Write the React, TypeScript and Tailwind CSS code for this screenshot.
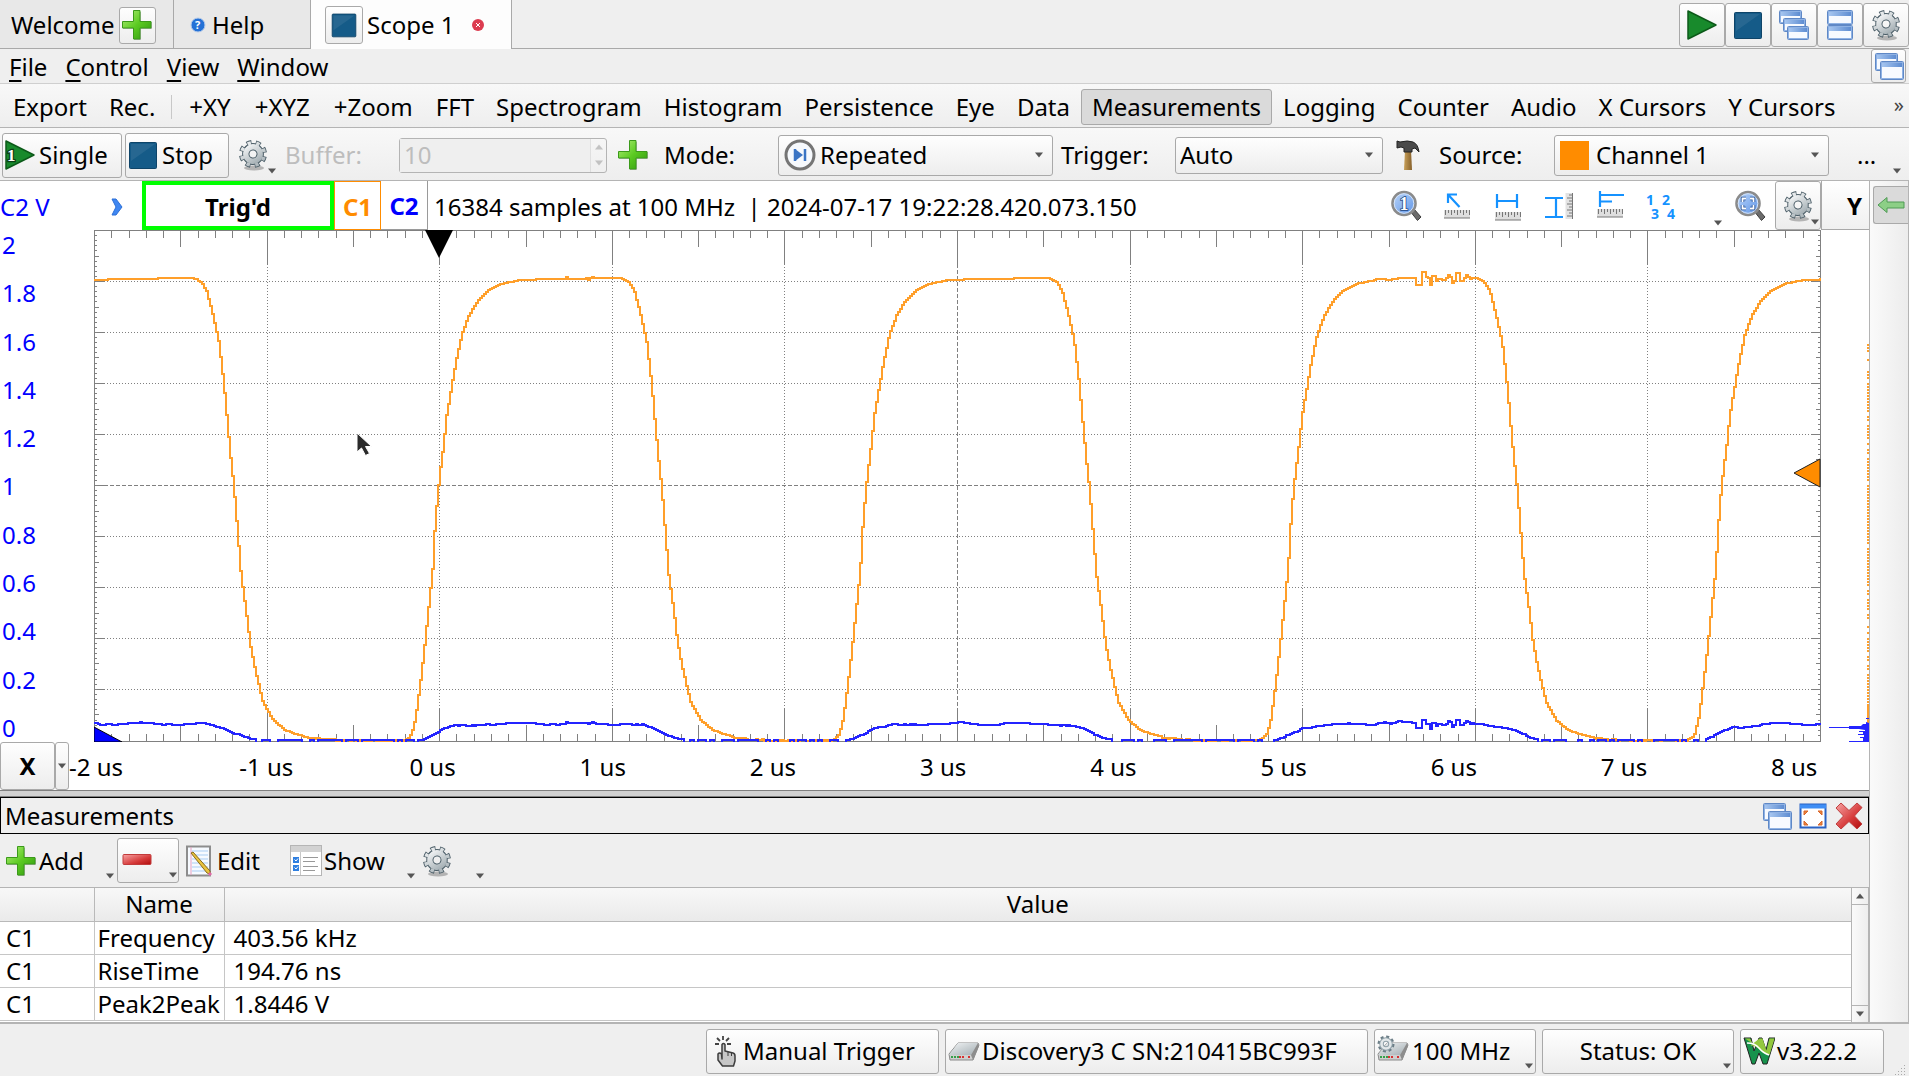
import { useState } from "react";
import type { ReactNode } from "react";
import clsx from "clsx";

type Measurement = { channel: string; name: string; value: string };

const measurements: Measurement[] = [
  { channel: "C1", name: "Frequency", value: "403.56 kHz" },
  { channel: "C1", name: "RiseTime", value: "194.76 ns" },
  { channel: "C1", name: "Peak2Peak", value: "1.8446 V" },
];

const menus = ["File", "Control", "View", "Window"];

const views = [
  "+XY",
  "+XYZ",
  "+Zoom",
  "FFT",
  "Spectrogram",
  "Histogram",
  "Persistence",
  "Eye",
  "Data",
  "Measurements",
  "Logging",
  "Counter",
  "Audio",
  "X Cursors",
  "Y Cursors",
];

const voltLabels = ["2", "1.8", "1.6", "1.4", "1.2", "1", "0.8", "0.6", "0.4", "0.2", "0"];
const timeLabels = ["-2 us", "-1 us", "0 us", "1 us", "2 us", "3 us", "4 us", "5 us", "6 us", "7 us", "8 us"];

const raised = "rounded-[3px] border border-[#a9a9a9] bg-linear-to-b from-[#fefefe] to-[#ededed]";
const bar = "border-b border-[#b4b4b4] bg-linear-to-b from-[#f8f8f8] to-[#eeeeee]";

/* ---------- icons ---------- */

function IconDefs() {
  return (
    <svg width="0" height="0" className="absolute" aria-hidden="true">
      <defs>
        <linearGradient id="green" x1="0" y1="0" x2="1" y2="1">
          <stop offset="0" stopColor="#b4ee7c" />
          <stop offset="0.5" stopColor="#5ccb22" />
          <stop offset="1" stopColor="#2f9410" />
        </linearGradient>
        <linearGradient id="red" x1="0" y1="0" x2="1" y2="1">
          <stop offset="0" stopColor="#f7a3a3" />
          <stop offset="0.6" stopColor="#d63a3a" />
          <stop offset="1" stopColor="#b00d0d" />
        </linearGradient>
        <linearGradient id="steel" x1="0" y1="0" x2="1" y2="1">
          <stop offset="0" stopColor="#f1f3f4" />
          <stop offset="1" stopColor="#a3aeb3" />
        </linearGradient>
        <linearGradient id="glass" x1="0" y1="0" x2="1" y2="1">
          <stop offset="0" stopColor="#bcd6fa" />
          <stop offset="1" stopColor="#5c93e6" />
        </linearGradient>
        <linearGradient id="titlebar" x1="0" y1="0" x2="1" y2="0">
          <stop offset="0" stopColor="#a9c8f1" />
          <stop offset="1" stopColor="#5b8ad0" />
        </linearGradient>
        <linearGradient id="wood" x1="0" y1="0" x2="1" y2="0">
          <stop offset="0" stopColor="#c9a15a" />
          <stop offset="1" stopColor="#86602a" />
        </linearGradient>
      </defs>
    </svg>
  );
}

function Gear({ className = "size-8" }: { className?: string }) {
  return (
    <svg viewBox="0 0 32 32" className={className}>
      <ellipse cx="17" cy="29" rx="10" ry="2.500" fill="#000" opacity="0.25" />
      <g transform="rotate(12 16 15)">
        <circle cx="16" cy="15" r="11.5" fill="none" stroke="#4c5e68" strokeWidth="5" strokeDasharray="4.8 4.23" />
        <circle cx="16" cy="15" r="7.2" fill="none" stroke="#4c5e68" strokeWidth="7.4" />
        <circle cx="16" cy="15" r="11.3" fill="none" stroke="url(#steel)" strokeWidth="3.6" strokeDasharray="3.4 5.47" strokeDashoffset="-0.7" />
        <circle cx="16" cy="15" r="7.2" fill="none" stroke="url(#steel)" strokeWidth="5.4" />
      </g>
    </svg>
  );
}

function Plus({ className = "size-8" }: { className?: string }) {
  return (
    <svg viewBox="0 0 32 32" className={className}>
      <path d="M13 3h7v10h11v7H20v11h-7V20H2v-7h11z" fill="#000" opacity="0.25" />
      <path d="M12.500 1.500h6.500v11h11v6.500h-11v11h-6.500v-11h-11v-6.500h11z" fill="url(#green)" stroke="#3b9a1a" strokeLinejoin="round" />
    </svg>
  );
}

function StopSquare({ className = "size-8" }: { className?: string }) {
  return (
    <svg viewBox="0 0 32 32" className={className}>
      <rect x="2.500" y="3.500" width="27" height="26" rx="1" fill="#155b88" stroke="#0e4468" />
      <path d="M4 5h24L4 22z" fill="#fff" opacity="0.08" />
    </svg>
  );
}

function Play({ mark }: { mark?: string }) {
  return (
    <svg viewBox="0 0 32 32" className="size-8">
      <path d="M2 2L30 16 2 30z" fill="#188a2c" stroke="#0d5a1a" strokeWidth="1.500" strokeLinejoin="round" />
      {mark && (
        <text x="3" y="22" fontSize="17" fontWeight="bold" fontFamily="Liberation Serif, serif" fill="#fff" stroke="#0b3d14" strokeWidth="2.500" paintOrder="stroke">
          {mark}
        </text>
      )}
    </svg>
  );
}

function Pane({ x, y, w, h }: { x: number; y: number; w: number; h: number }) {
  return (
    <g>
      <rect x={x + 0.5} y={y + 0.5} width={w} height={h} rx="1" fill="#f7faff" stroke="#5f88c6" />
      <rect x={x + 1} y={y + 1} width={w - 1} height="5" fill="url(#titlebar)" />
      <rect x={x + 1.5} y={y + 1.5} width={w - 2} height={h - 2} fill="none" stroke="#8fb2e4" />
    </g>
  );
}

function Windows({ count = 2 }: { count?: number }) {
  return (
    <svg viewBox="0 0 32 32" className="size-8">
      {count === 3 ? (
        <>
          <Pane x={1} y={1} w={22} h={13} />
          <Pane x={5} y={9} w={22} h={13} />
          <Pane x={9} y={17} w={21} h={13} />
        </>
      ) : (
        <>
          <Pane x={2} y={3} w={22} h={17} />
          <Pane x={7} y={11} w={23} h={18} />
        </>
      )}
    </svg>
  );
}

function TiledWindows() {
  return (
    <svg viewBox="0 0 32 32" className="size-8">
      <Pane x={3} y={1} w={25} h={14} />
      <Pane x={3} y={16} w={25} h={14} />
    </svg>
  );
}

function Magnifier({ children }: { children: ReactNode }) {
  return (
    <svg viewBox="0 0 32 32" className="size-8">
      <path d="M20 21l4-2 7 8-3.500 3.500z" fill="#6b6b6b" stroke="#3f3f3f" />
      <circle cx="14" cy="13.500" r="11.500" fill="url(#glass)" stroke="#8b8b8b" strokeWidth="2.600" />
      <circle cx="14" cy="13.500" r="9.800" fill="none" stroke="#d6e4f7" />
      {children}
    </svg>
  );
}

function Ruler({ vertical, y = 20 }: { vertical?: boolean; y?: number }) {
  if (vertical) {
    return (
      <g>
        <rect x="22.500" y="3" width="7" height="26" fill="#e3e3e3" />
        <path d="M29.500 3v26" stroke="#777" />
        <path d="M26 5h3M24 8h5M26 11h3M24 14h5M26 17h3M24 20h5M26 23h3M24 26h5" stroke="#777" />
      </g>
    );
  }
  return (
    <g>
      <rect x="3" y={y} width="26" height="8" fill="#dedede" />
      <path d={`M3 ${y + 8}h26`} stroke="#777" />
      <path d={`M4.500 ${y}v5M7.500 ${y}v3M10.500 ${y}v5M13.500 ${y}v3M16.500 ${y}v5M19.500 ${y}v3M22.500 ${y}v5M25.500 ${y}v3M28.500 ${y}v5`} stroke="#777" />
    </g>
  );
}

const rulerIcons: { label: string; icon: ReactNode }[] = [
  {
    label: "Zoom 1:1",
    icon: (
      <Magnifier>
        <text x="9.500" y="20" fontSize="18" fontWeight="bold" fontFamily="Liberation Serif, serif" fill="#fff" stroke="#20447c" strokeWidth="1.500" paintOrder="stroke">
          1
        </text>
      </Magnifier>
    ),
  },
  {
    label: "Free ruler",
    icon: (
      <svg viewBox="0 0 32 32" className="size-8">
        <path d="M18.500 17L7 4.500M7 13V4.500h9" fill="none" stroke="#1592ff" strokeWidth="2.200" />
        <Ruler y={20} />
      </svg>
    ),
  },
  {
    label: "Horizontal ruler",
    icon: (
      <svg viewBox="0 0 32 32" className="size-8">
        <path d="M5 4v14M25 4v14M5 11h20" fill="none" stroke="#1592ff" strokeWidth="2.200" />
        <Ruler y={22} />
      </svg>
    ),
  },
  {
    label: "Vertical ruler",
    icon: (
      <svg viewBox="0 0 32 32" className="size-8">
        <path d="M2 8h18M2 27h18M13 8v19" fill="none" stroke="#1592ff" strokeWidth="2.200" />
        <Ruler vertical />
      </svg>
    ),
  },
  {
    label: "Pulse ruler",
    icon: (
      <svg viewBox="0 0 32 32" className="size-8">
        <path d="M6 1v16M6 5h24M6 11.500h12" fill="none" stroke="#1592ff" strokeWidth="2.200" />
        <Ruler y={19} />
      </svg>
    ),
  },
  {
    label: "Quick values",
    icon: (
      <svg viewBox="0 0 32 32" className="size-8 overflow-visible">
        <g fontSize="14" fontWeight="bold" fontFamily="Noto Sans, sans-serif" fill="#1592ff">
          <text x="1" y="15">1</text>
          <text x="17" y="15">2</text>
          <text x="6" y="29">3</text>
          <text x="22" y="29">4</text>
        </g>
      </svg>
    ),
  },
];

function Caret({ className }: { className?: string }) {
  return (
    <svg viewBox="0 0 8 6" className={clsx("h-[6px] w-[8px]", className)}>
      <path d="M0 0.500h8L4 5.500z" fill="#555" />
    </svg>
  );
}

function Device({ gear }: { gear?: boolean }) {
  return (
    <svg viewBox="0 0 32 32" className="size-8">
      <path d="M10 8h20l1 2-6 15H2l-1-6z" fill="#cfcfcf" stroke="#8a8a8a" />
      <path d="M10 8h20l-7 12H1z" fill="url(#steel)" />
      <path d="M30 8l1 3-6 14-2-5z" fill="#8d8d8d" />
      <path d="M3 22h8" stroke="#35a04b" strokeWidth="2" strokeDasharray="2 1" />
      <path d="M11 22h5M20 22h2" stroke="#d63232" strokeWidth="2" strokeDasharray="2 1" />
      {gear && (
        <g>
          <circle cx="9" cy="9" r="7" fill="none" stroke="#6b7d86" strokeWidth="3" strokeDasharray="2.900 2.590" />
          <circle cx="9" cy="9" r="4.500" fill="none" stroke="#8fa0a8" strokeWidth="4.500" />
          <circle cx="9" cy="9" r="4.500" fill="none" stroke="#e3e8ea" strokeWidth="2.600" />
        </g>
      )}
    </svg>
  );
}

function Hand() {
  return (
    <svg viewBox="0 0 24 32" className="h-8 w-6">
      <path d="M10 1v4M4 3l3 3M16 3l-3 3M2 9h4M14 9h4" stroke="#444" strokeWidth="1.800" fill="none" />
      <path d="M9 24V9.500q1.500-2 3 0V16l8 2q2 .5 2 3v5l-1.500 5H9.500L5 25v-6q1.500-2 3.500 0z" fill="#c6c6c6" stroke="#3d3d3d" strokeWidth="1.500" strokeLinejoin="round" />
      <path d="M15 17v4M18.500 18v3" stroke="#3d3d3d" />
    </svg>
  );
}

function Waveforms() {
  return (
    <svg viewBox="0 0 32 32" className="size-8">
      <path d="M1 3h7l3 13 5-13h3l4 12 3-12h6l-8 26h-4l-4-11-4 11H9z" fill="#17924c" stroke="#222" />
      <path d="M2 3.500h5l2.500 5zM16.500 3.500h3l4 12 3-12h5L26.500 20q-6-1-10-5.500-4-4-9-4z" fill="#93c83e" />
      <path d="M4 8q8 0 12 5t10 7" fill="none" stroke="#fff" strokeWidth="1.500" />
    </svg>
  );
}

/* ---------- plot ---------- */

const PLOT_W = 1727;
const PLOT_H = 512;
const US = 172.6;
const PERIOD = 427.7;
const ORIGIN = 345;

// one period of each channel, x relative to the trigger position
const c1Shape = [
  [-36, 509], [-32, 508], [-28, 504], [-24, 488], [-19, 450], [-15, 415], [-11, 377], [-7, 339], [-5, 301],
  [-2, 264], [0, 245], [4, 214], [7, 185], [11, 162], [16, 133], [22, 105], [29, 86], [38, 71], [48, 61],
  [61, 54], [81, 50], [111, 49], [181, 48], [186, 50], [190, 53], [195, 62], [201, 85], [207, 112],
  [212, 155], [216, 200], [219, 231], [222, 258], [225, 295], [229, 345], [234, 380], [238, 413], [243, 439],
  [251, 472], [261, 490], [273, 500], [284, 504], [301, 508], [331, 510], [391.7, 510],
];
const c2Shape = [
  [-36, 510], [-18, 510], [-11, 507], [1, 501], [11, 497], [31, 496], [51, 494], [91, 494], [190, 494],
  [201, 496], [214, 499], [226, 504], [236, 508], [246, 510], [391.7, 510],
];
const glitches = [
  [1323, 6], [1326, 6], [1329, -7], [1332, -2], [1336, 6], [1339, -3], [1342, 2], [1349, 2], [1354, -3],
  [1358, 5], [1360, 3], [1363, -5], [1367, 3], [1372, -3], [1376, 1], [472, -2], [498, -1], [494, 2],
];

function sample(shape: number[][], x: number) {
  let t = (x - ORIGIN + 36) % PERIOD;
  if (t < 0) t += PERIOD;
  t -= 36;
  for (let i = 1; i < shape.length; i++) {
    if (t <= shape[i][0]) {
      const [x0, y0] = shape[i - 1];
      const [x1, y1] = shape[i];
      return y0 + ((y1 - y0) * (t - x0)) / (x1 - x0);
    }
  }
  return shape[shape.length - 1][1];
}

function noise(i: number) {
  const n = Math.sin(i * 12.9898) * 43758.5453;
  return n - Math.floor(n);
}

function trace(shape: number[][], kind: "c1" | "c2") {
  let d = "";
  for (let i = 0; i * 2 <= PLOT_W; i++) {
    const x = i * 2;
    const base = sample(shape, x);
    let y = base;
    if (kind === "c2") {
      // resting level toggles around the lower edge of the plot
      if (base >= 509.5) y = noise(Math.floor(i / 2)) > 0.55 ? 513 : 510;
      else if (base < 506) y += Math.round(Math.sin(i / 5) + noise(Math.floor(i / 3)) - 0.7);
    } else if (base > 506) {
      y += noise(i) > 0.5 ? 1 : 0;
    }
    if (base < 500) {
      const hit = glitches.find(([gx]) => Math.abs(gx - x) <= 1);
      if (hit) y += kind === "c2" ? Math.round(hit[1] * 0.7) : hit[1];
      else if (x > 1280 && x < 1385) y += noise(Math.floor(i / 2)) > 0.6 ? -1 : 0;
    }
    y = Math.round(y);
    d += i === 0 ? `M0 ${y}` : `V${y}H${x + 2}`;
  }
  return d;
}

const c1Path = trace(c1Shape, "c1");
const c2Path = trace(c2Shape, "c2");

function gridTicks() {
  let d = "";
  for (let i = 1; i < 100; i++) {
    const x = Math.round((i * US) / 10) + 0.5;
    const len = i % 10 === 0 ? 34 : i % 5 === 0 ? 17 : 8;
    d += `M${x} 0v${len}M${x} ${PLOT_H}v-${len}`;
    const y = Math.round(i * 5.1) + 0.5;
    const side = i % 10 === 0 ? 10 : i % 5 === 0 ? 5 : 3;
    d += `M0 ${y}h${side}M${PLOT_W} ${y}h-${side}`;
  }
  return d;
}

const divisions = [1, 2, 3, 4, 5, 6, 7, 8, 9];

function Plot() {
  return (
    <svg viewBox={`0 0 ${PLOT_W} ${PLOT_H}`} preserveAspectRatio="none" className="h-full min-w-0 flex-1" role="img" aria-label="Oscilloscope traces">
      <rect x="0.5" y="0.5" width={PLOT_W - 1} height={PLOT_H - 1} fill="#fff" stroke="#808080" />
      <path d={gridTicks()} stroke="#808080" fill="none" />
      {divisions.map((n) => (
        <g key={n} stroke="#808080">
          <path d={`M${Math.round(n * US) + 0.5} 34V478`} strokeDasharray={n === 5 ? "4 2" : "1 2"} />
          <path d={`M10 ${n * 51 + 0.5}H1717`} strokeDasharray={n === 5 ? "4 2" : "1 2"} />
        </g>
      ))}
      <path d="M0 497L28 512H0z" fill="#0000ff" stroke="#000" />
      <path d={c1Path} fill="none" stroke="#ff9f2a" strokeWidth="2" shapeRendering="crispEdges" />
      <path d={c2Path} fill="none" stroke="#2424ff" strokeWidth="2" shapeRendering="crispEdges" />
      <path d="M331 0h28L345 28z" fill="#000" />
      <path d="M1726 229v28L1700 243z" fill="#ff8c00" stroke="#222" />
      <path d="M263 203v19l4.500-4 4 7.500 4-2-4-7h6z" fill="#2b2b2b" stroke="#fff" />
    </svg>
  );
}

function sideDashes() {
  let d = "";
  for (let y = 112; y < 496; y += 3) {
    if (noise(y) > 0.25) d += `M46 ${y}h2`;
  }
  return d;
}

function HistogramStrip() {
  return (
    <svg viewBox="0 0 48 512" preserveAspectRatio="none" className="h-full w-12">
      <path d={sideDashes()} stroke="#ff9f2a" strokeWidth="2" />
      <path d="M47 476v24" stroke="#ff9f2a" strokeWidth="2" />
      <path
        d="M48 493V512H28v-1h14v-3h-3v-1h4v-2h-6v-1h5v-2h-4v-1h6v-1l-6-1H28v-1H8v-1h20v-1h12l2-2h3v-2z"
        fill="#2424ff"
      />
      <path d="M45 488.500h3" stroke="#2424ff" />
    </svg>
  );
}

/* ---------- pieces ---------- */

function Combo({
  id,
  options,
  className,
  icon,
}: {
  id: string;
  options: string[];
  className: string;
  icon?: ReactNode;
}) {
  return (
    <div className={clsx("relative", className)}>
      <select
        id={id}
        className={clsx("h-full w-full appearance-none", raised, icon ? "pl-[41px]" : "pl-1")}
      >
        {options.map((option) => (
          <option key={option}>{option}</option>
        ))}
      </select>
      {icon && <span className="pointer-events-none absolute inset-y-0 left-[6px] flex items-center">{icon}</span>}
      <Caret className="pointer-events-none absolute top-1/2 right-[10px] -translate-y-1/2" />
    </div>
  );
}

function Tabs() {
  return (
    <div className="flex h-[49px] bg-[#efefef]">
      <div className="flex w-[174px] items-center gap-1 border-r border-b border-[#a9a9a9] bg-[#e8e8e8] pt-[2px] pl-[11px]">
        <button type="button">Welcome</button>
        <button type="button" aria-label="New instrument" className={clsx("flex size-[37px] items-center justify-center", raised)}>
          <Plus />
        </button>
      </div>
      <button type="button" className="flex w-[137px] items-center gap-[6px] border-r border-b border-[#a9a9a9] bg-[#e8e8e8] pt-[2px] pl-4">
        <svg viewBox="0 0 16 16" className="size-4">
          <circle cx="8" cy="8" r="7" fill="#2471d6" stroke="#b9cdea" />
          <text x="5" y="12" fontSize="11" fontWeight="bold" fontFamily="Noto Sans, sans-serif" fill="#fff">?</text>
        </svg>
        Help
      </button>
      <div className="flex w-[200px] items-center bg-[#fdfdfd] pl-[14px]">
        <span className={clsx("flex size-[38px] items-center justify-center", raised)}>
          <StopSquare className="size-7" />
        </span>
        <button type="button" className="ml-1">Scope 1</button>
        <button type="button" aria-label="Close Scope 1" className="ml-[18px]">
          <svg viewBox="0 0 12 12" className="size-3">
            <circle cx="6" cy="6" r="6" fill="#dc3c50" />
            <path d="M4 4l4 4M8 4l-4 4" stroke="#fff" />
          </svg>
        </button>
      </div>
      <div className="flex flex-1 justify-end border-b border-l border-[#a9a9a9] pt-[3px] pb-px">
        {[
          { label: "Run all", icon: <Play /> },
          { label: "Stop all", icon: <StopSquare /> },
          { label: "Cascade", icon: <Windows count={3} /> },
          { label: "Tile", icon: <TiledWindows /> },
          { label: "Settings", icon: <Gear /> },
        ].map((item) => (
          <button key={item.label} type="button" aria-label={item.label} className={clsx("flex w-[46px] items-center justify-center", raised)}>
            {item.icon}
          </button>
        ))}
      </div>
    </div>
  );
}

function MenuBar() {
  return (
    <div className="flex h-[35px] items-center border-b border-[#cfcfcf] bg-[#efefef] pr-[3px] pl-[9px]">
      <nav className="flex flex-1 gap-[18px] pt-[2px]">
        {menus.map((menu) => (
          <button key={menu} type="button">
            <span className="underline decoration-2 underline-offset-4">{menu[0]}</span>
            {menu.slice(1)}
          </button>
        ))}
      </nav>
      <button type="button" aria-label="Undock" className={clsx("flex h-[34px] w-[35px] items-center justify-center", raised)}>
        <Windows />
      </button>
    </div>
  );
}

function ViewBar({ active, onToggle }: { active: string; onToggle: (view: string) => void }) {
  return (
    <div className={clsx("flex h-[44px] items-center pt-[2px] pl-[2px]", bar)}>
      <button type="button" className="px-[11px]">Export</button>
      <button type="button" className="px-[11px]">Rec.</button>
      <span className="mr-[5px] ml-[5px] h-6 w-px bg-[#c8c8c8]" />
      {views.map((view) => (
        <button
          key={view}
          type="button"
          onClick={() => onToggle(view)}
          className={clsx(
            "h-9 rounded-[3px] border",
            view.startsWith("+") ? "px-[11px]" : "px-[10px]",
            active === view ? "border-[#a9a9a9] bg-[#dadada]" : "border-transparent",
          )}
        >
          {view}
        </button>
      ))}
      <button type="button" aria-label="More views" className="mr-[5px] ml-auto pb-1 text-xl text-[#444]">»</button>
    </div>
  );
}

function ControlBar() {
  return (
    <div className={clsx("flex h-[53px] items-center pt-[2px] pl-[2px]", bar)}>
      <button type="button" className={clsx("flex h-[45px] w-[120px] items-center gap-[3px] pl-px", raised)}>
        <Play mark="1" />
        Single
      </button>
      <button type="button" className={clsx("ml-[3px] flex h-[45px] w-[104px] items-center gap-[3px] pl-px", raised)}>
        <StopSquare />
        Stop
      </button>
      <button type="button" aria-label="Acquisition options" className="relative ml-2 flex h-[45px] w-[39px] items-center">
        <Gear />
        <Caret className="absolute right-0 bottom-1" />
      </button>
      <label htmlFor="buffer" className="ml-[9px] w-[114px] text-[#bdbdbd]">Buffer:</label>
      <div className="flex h-[35px] w-[208px] rounded-[3px] border border-[#b4b4b4]">
        <input id="buffer" disabled defaultValue="10" className="min-w-0 flex-1 bg-[#efefef] pl-1 text-[#bdbdbd]" />
        <span className="flex w-4 flex-col items-center justify-around border-l border-[#b4b4b4] opacity-30">
          <Caret className="rotate-180" />
          <Caret />
        </span>
      </div>
      <button type="button" aria-label="Add buffer" className="ml-[10px]">
        <Plus />
      </button>
      <label htmlFor="mode" className="ml-[15px] w-[114px]">Mode:</label>
      <Combo
        id="mode"
        options={["Repeated", "Screen", "Shift", "Record"]}
        className="h-[41px] w-[275px]"
        icon={
          <svg viewBox="0 0 32 32" className="size-8">
            <circle cx="16" cy="16" r="14" fill="#f6f9fd" stroke="#757575" strokeWidth="3" />
            <path d="M11 10v12M21 10v12" stroke="#3a74c4" strokeWidth="2.500" />
            <path d="M11 10l8 6-8 6z" fill="#3a74c4" />
          </svg>
        }
      />
      <label htmlFor="trigger" className="ml-2 w-[114px]">Trigger:</label>
      <Combo id="trigger" options={["Auto", "Normal", "None"]} className="h-[37px] w-[208px]" />
      <button type="button" aria-label="Trigger tools" className="ml-2">
        <svg viewBox="0 0 32 32" className="size-8">
          <path d="M14 11h6l1 20h-8z" fill="url(#wood)" />
          <path d="M6 2l3 1q8-2 13 0 5 2 6 10l-4-4-3 1v3h-8v-4l-3-1-4 1z" fill="#4a4a4a" stroke="#222" />
        </svg>
      </button>
      <label htmlFor="source" className="ml-4 w-[115px]">Source:</label>
      <Combo
        id="source"
        options={["Channel 1", "Channel 2"]}
        className="h-[41px] w-[275px]"
        icon={<span className="size-[29px] bg-[#ff8c00]" />}
      />
      <button type="button" className="relative ml-auto h-[45px] w-[52px] text-left">
        ...
        <Caret className="absolute right-[8px] bottom-1" />
      </button>
    </div>
  );
}

function InfoBar() {
  return (
    <div className="flex h-[49px]">
      <div className="flex w-[142px] items-center justify-between pt-[2px] pr-[18px] text-[#0000ff]">
        C2 V
        <svg viewBox="0 0 14 18" className="h-[18px] w-[14px]">
          <path d="M2 1h4l6 8-6 8H2l4-8z" fill="#3f87f2" stroke="#2c6fd6" />
        </svg>
      </div>
      <div className="flex w-[192px] items-center justify-center border-4 border-[#00ff00] pt-[2px] font-bold">Trig'd</div>
      <button type="button" className="w-[47px] border border-[#ff8c00] pt-[2px] font-bold text-[#ff8c00]">C1</button>
      <button type="button" className="w-[47px] border-r border-b border-[#9a9a9a] pt-[2px] font-bold text-[#0000ff]">C2</button>
      <p className="flex min-w-0 flex-1 items-center pt-[2px] pl-[6px] whitespace-pre">
        16384 samples at 100 MHz  | 2024-07-17 19:22:28.420.073.150
      </p>
      {rulerIcons.map((item) => (
        <button key={item.label} type="button" aria-label={item.label} className="flex w-[51px] items-center justify-center">
          {item.icon}
        </button>
      ))}
      <button type="button" aria-label="More tools" className="relative w-[38px]">
        <Caret className="absolute right-[2px] bottom-1" />
      </button>
      <button type="button" aria-label="Fit" className="flex w-[51px] items-center justify-center">
        <Magnifier>
          <path d="M8.500 12V8.500H12M16 8.500h3.500V12M19.500 15v3.500H16M12 18.500H8.500V15" fill="none" stroke="#234f94" strokeWidth="3.500" />
          <path d="M8.500 12V8.500H12M16 8.500h3.500V12M19.500 15v3.500H16M12 18.500H8.500V15" fill="none" stroke="#fff" strokeWidth="1.800" />
        </Magnifier>
      </button>
      <button type="button" aria-label="Plot settings" className={clsx("relative flex w-[46px] items-center justify-center", raised)}>
        <Gear />
        <Caret className="absolute right-px bottom-1" />
      </button>
      <button type="button" className="w-[48px] border-b border-l border-[#a9a9a9] bg-linear-to-b from-white to-[#f0f0f0] pt-[2px] pl-[18px] font-bold">
        Y
      </button>
    </div>
  );
}

function TimeAxis() {
  return (
    <div className="flex h-[48px]">
      <button type="button" className={clsx("w-[55px] font-bold", raised)}>X</button>
      <button type="button" aria-label="Axis options" className={clsx("flex w-[14px] items-center justify-center", raised)}>
        <Caret className="shrink-0" />
      </button>
      <div className="mr-[50px] flex flex-1 items-center pt-[2px] whitespace-nowrap">
        {timeLabels.map((label) => (
          <span key={label} className="flex-1 last:w-[48px] last:flex-none">{label}</span>
        ))}
      </div>
    </div>
  );
}

function MeasurementsPanel() {
  return (
    <section>
      <header className="flex h-[37px] items-center border border-black bg-[#efefef] pl-1">
        <h2 className="flex-1">Measurements</h2>
        <div className="flex gap-1 pr-[3px]">
          <button type="button" aria-label="Undock panel">
            <Windows />
          </button>
          <button type="button" aria-label="Maximize panel">
            <svg viewBox="0 0 32 32" className="size-8">
              <rect x="3.500" y="4.500" width="25" height="23" fill="#fff" stroke="#2a62c4" strokeWidth="2" />
              <path d="M3 6.500h26" stroke="#3f8ef5" strokeWidth="4" />
              <path d="M7 15v-4h4zM25 15v-4h-4zM7 21v4h4zM25 21v4h-4z" fill="#e8873c" stroke="#d9652a" />
            </svg>
          </button>
          <button type="button" aria-label="Close panel">
            <svg viewBox="0 0 32 32" className="size-8">
              <path d="M8 3l8 7.500L24 3l5 4.500-7.500 8.500 7.500 8-5 5-8-7.500L8 29l-5-5 7.500-8L3 8z" fill="url(#red)" stroke="#c04040" strokeLinejoin="round" />
            </svg>
          </button>
        </div>
      </header>
      <div className="flex h-[53px] items-center bg-[#efefef] pl-[5px]">
        <button type="button" className="relative flex h-[45px] w-[110px] items-center gap-[2px]">
          <Plus />
          Add
          <Caret className="absolute right-px bottom-1" />
        </button>
        <button type="button" aria-label="Remove" className={clsx("relative ml-[2px] flex h-[45px] w-[62px] items-center pl-[3px]", raised)}>
          <svg viewBox="0 0 32 32" className="size-8">
            <rect x="2" y="9.500" width="28" height="10" rx="1" fill="url(#red)" stroke="#c23b3b" />
          </svg>
          <Caret className="absolute right-px bottom-1" />
        </button>
        <button type="button" className="ml-1 flex items-center gap-[2px]">
          <svg viewBox="0 0 32 32" className="size-8">
            <rect x="4" y="1.500" width="23" height="29" fill="#f6faff" stroke="#8d8d8d" strokeWidth="2" />
            <path d="M9 6h16M9 10h16M9 14h16M9 18h16M9 22h16M9 26h16" stroke="#a9cdf3" />
            <path d="M8 2v28" stroke="#e6a0c0" />
            <path d="M8 8l2-1 17 19v3l-3-1z" fill="#e8c33f" stroke="#8a6a1a" />
            <path d="M26 28l2 2" stroke="#e06aa6" strokeWidth="3" />
          </svg>
          Edit
        </button>
        <button type="button" className="relative ml-[30px] flex h-[45px] w-[125px] items-center gap-[2px]">
          <svg viewBox="0 0 32 32" className="size-8">
            <rect x="0.500" y="0.500" width="31" height="30" fill="#fff" stroke="#b5b5b5" />
            <path d="M1 4h30" stroke="#d2d2d2" strokeWidth="6" />
            <path d="M10.500 7v23" stroke="#c8c8c8" />
            <rect x="3" y="12" width="6" height="6" fill="#2f7fe0" />
            <rect x="3" y="20" width="6" height="6" fill="#2f7fe0" />
            <path d="M4.500 14.500l1.500 1.500 2-2.500M4.500 22.500l1.500 1.500 2-2.500" stroke="#fff" fill="none" />
            <path d="M13 12.500h15M13 16.500h12M13 21.500h15M13 25.500h12" stroke="#999" />
          </svg>
          Show
          <Caret className="absolute right-0 bottom-1" />
        </button>
        <button type="button" aria-label="Panel options" className="relative ml-[6px] flex h-[45px] w-[63px] items-center">
          <Gear />
          <Caret className="absolute right-0 bottom-1" />
        </button>
      </div>
      <div className="flex h-[137px] border-t border-b-2 border-[#b4b4b4] bg-white">
        <div className="flex-1 overflow-hidden">
          <table className="w-full border-collapse">
            <thead className="h-[33px] bg-linear-to-b from-[#f8f8f8] to-[#eaeaea]">
              <tr>
                <th className="w-[94px] border-r border-b border-[#b9b9b9]" aria-label="Channel" />
                <th className="w-[130px] border-r border-b border-[#b9b9b9] font-normal">Name</th>
                <th className="border-b border-[#b9b9b9] font-normal">Value</th>
              </tr>
            </thead>
            <tbody>
              {measurements.map((row) => (
                <tr key={row.name} className="h-[33px] border-b border-[#c6c6c6]">
                  <td className="border-r border-[#c6c6c6] pl-[6px]">{row.channel}</td>
                  <td className="border-r border-[#c6c6c6] pl-[3px]">{row.name}</td>
                  <td className="pl-[9px]">{row.value}</td>
                </tr>
              ))}
            </tbody>
          </table>
        </div>
        <div className="flex w-[18px] flex-col justify-between border-x border-[#b4b4b4] bg-linear-to-r from-[#fafafa] to-[#eeeeee]">
          <button type="button" aria-label="Scroll up" className="flex h-[17px] items-center justify-center border-b border-[#b4b4b4]">
            <Caret className="rotate-180" />
          </button>
          <button type="button" aria-label="Scroll down" className="flex h-[17px] items-center justify-center border-t border-[#b4b4b4]">
            <Caret />
          </button>
        </div>
      </div>
    </section>
  );
}

function StatusBar() {
  return (
    <footer className="flex h-[52px] items-center justify-end gap-[6px] bg-[#efefef] pt-[2px] pr-[3px]">
      <button type="button" className={clsx("flex h-[45px] w-[233px] items-center gap-[6px] pl-[6px]", raised)}>
        <Hand />
        Manual Trigger
      </button>
      <button type="button" className={clsx("flex h-[45px] w-[423px] items-center gap-[2px] pl-[2px]", raised)}>
        <Device />
        Discovery3 C SN:210415BC993F
      </button>
      <button type="button" className={clsx("relative flex h-[45px] w-[162px] items-center gap-[3px] pl-[2px]", raised)}>
        <Device gear />
        100 MHz
        <Caret className="absolute right-[2px] bottom-1" />
      </button>
      <button type="button" className={clsx("relative h-[45px] w-[192px]", raised)}>
        Status: OK
        <Caret className="absolute right-[2px] bottom-1" />
      </button>
      <button type="button" className={clsx("flex h-[45px] w-[144px] items-center gap-[2px] pl-[2px]", raised)}>
        <Waveforms />
        v3.22.2
      </button>
      <svg viewBox="0 0 12 12" className="ml-1 size-3 self-end">
        <path d="M1 10.500h10M4 7.500h7M7 4.500h4M10 1.500h1" stroke="#aaa" strokeDasharray="1 2" />
      </svg>
    </footer>
  );
}

export default function App() {
  const [active, setActive] = useState("Measurements");

  return (
    <div className="flex h-screen flex-col overflow-hidden bg-white font-['Noto_Sans',sans-serif] text-[24px] leading-8 whitespace-nowrap text-black">
      <IconDefs />
      <Tabs />
      <MenuBar />
      <ViewBar active={active} onToggle={setActive} />
      <ControlBar />
      <div className="flex min-h-0 flex-1">
        <main className="flex min-w-0 flex-1 flex-col">
          <InfoBar />
          <div className="flex min-h-0 flex-1">
            <div className="flex w-[94px] flex-col justify-between pt-[3px] pb-[2px] pl-[2px] leading-6 text-[#0000ff]">
              {voltLabels.map((label) => (
                <span key={label}>{label}</span>
              ))}
            </div>
            <Plot />
            <HistogramStrip />
          </div>
          <TimeAxis />
          <div className="h-[7px] border-y border-[#808080] bg-[#d2d2d2]" />
          <MeasurementsPanel />
        </main>
        <aside className="w-[40px] border-x border-b-2 border-[#b4b4b4] bg-linear-to-r from-[#fafafa] to-[#ececec] pt-[5px] pl-[3px]">
          <button type="button" aria-label="Show channels" className="flex h-[38px] w-full items-center justify-center rounded-l-[3px] border border-r-0 border-[#a9a9a9] bg-[#dadada]">
            <svg viewBox="0 0 28 18" className="h-[18px] w-7">
              <path d="M1 9l9-7.500v4.500h17v6H10v4.500z" fill="#8ccf86" stroke="#4f9a55" strokeLinejoin="round" />
            </svg>
          </button>
        </aside>
      </div>
      <StatusBar />
    </div>
  );
}
